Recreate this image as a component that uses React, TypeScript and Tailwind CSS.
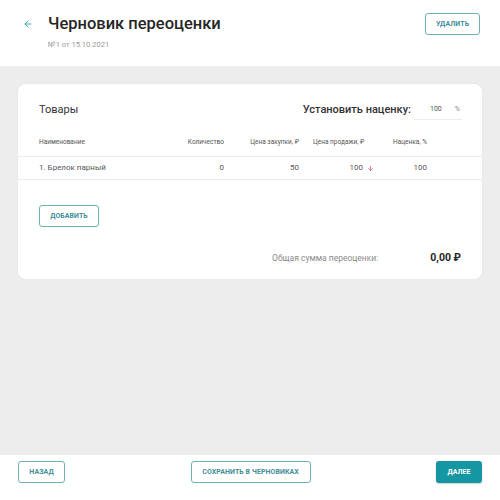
import { ArrowLeft, ArrowDown } from 'lucide-react';

const font = { fontFamily: 'Roboto, "Noto Sans", sans-serif' };

function OutlineButton({ label, className }: { label: string; className?: string }) {
  return (
    <button
      className={`h-[22px] rounded-[3px] border border-[#6fb2b8] bg-white text-[7px] font-bold uppercase tracking-[0.01em] text-[#3f8e97] ${className ?? ''}`}
    >
      {label}
    </button>
  );
}

export default function App() {
  return (
    <div className="flex h-[500px] w-[500px] flex-col bg-white text-[#333]" style={font}>
      <header className="flex h-[66px] shrink-0 items-start justify-between bg-white pl-[23px] pr-[20px]">
        <div className="flex items-start pt-[13px]">
          <ArrowLeft size={10} strokeWidth={2} className="mt-[6px] text-[#1a9aa4]" />
          <div className="ml-[15px]">
            <h1 className="text-[16.5px] leading-[22px] font-medium text-[#262626]">Черновик переоценки</h1>
            <div className="mt-[4px] text-[7.5px] text-[#9a9a9a]">№1 от 15.10.2021</div>
          </div>
        </div>
        <OutlineButton label="Удалить" className="mt-[13px] w-[55px]" />
      </header>

      <main className="flex-1 bg-[#ededed] px-[18px] pt-[18px]">
        <div className="rounded-[8px] bg-white pt-[16px] pb-[12px] shadow-[0_0_3px_rgba(0,0,0,0.04)]">
          <div className="flex h-[20px] items-center justify-between pl-[21px] pr-[20px]">
            <span className="text-[11px] text-[#333]">Товары</span>
            <div className="flex items-center">
              <span className="text-[11px] font-medium text-[#333]">Установить наценку:</span>
              <div className="ml-[3px] flex h-[20px] w-[48px] items-center justify-between border-b border-[#eeeeee] pl-[16px] pr-[2px] text-[7px] text-[#555]">
                <span>100</span>
                <span className="text-[#888]">%</span>
              </div>
            </div>
          </div>

          <div className="mt-[10px] grid h-[27px] grid-cols-[131px_54px_75px_86px_42px] items-center border-b border-[#ececec] pl-[21px] text-[6.5px] text-[#555]">
            <span>Наименование</span>
            <span className="text-right">Количество</span>
            <span className="text-right">Цена закупки, ₽</span>
            <span className="pl-[14px]">Цена продажи, ₽</span>
            <span className="text-right">Наценка, %</span>
          </div>
          <div className="grid h-[23px] grid-cols-[131px_54px_75px_86px_42px] items-center border-b border-[#ececec] pl-[21px] text-[8px] text-[#555]">
            <span>1. Брелок парный</span>
            <span className="text-right text-[#555]">0</span>
            <span className="text-right">50</span>
            <span className="flex items-center justify-end pr-[11px]">
              100
              <ArrowDown size={7} strokeWidth={2.5} className="ml-[4px] text-[#e0525a]" />
            </span>
            <span className="text-right">100</span>
          </div>

          <div className="mt-[25px] flex pl-[21px]">
            <OutlineButton label="Добавить" className="h-[20px] w-[60px]" />
          </div>

          <div className="mt-[22px] flex h-[18px] items-center justify-end pr-[21px]">
            <span className="text-[8.5px] text-[#8a8a8a]">Общая сумма переоценки:</span>
            <span className="ml-[52px] text-[10.5px] font-bold text-[#262626]">0,00 ₽</span>
          </div>
        </div>
      </main>

      <footer className="flex h-[45px] shrink-0 items-start justify-between bg-white px-[18px] pt-[6px]">
        <OutlineButton label="Назад" className="w-[47px]" />
        <OutlineButton label="Сохранить в черновиках" className="w-[120px]" />
        <button className="h-[22px] w-[46px] rounded-[3px] bg-[#1597a3] text-[7px] font-bold uppercase text-white shadow-[0_1px_2px_rgba(0,0,0,0.2)]">
          Далее
        </button>
      </footer>
    </div>
  );
}
